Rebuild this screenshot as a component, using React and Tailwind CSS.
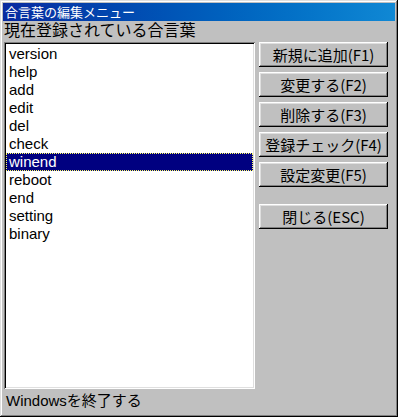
import React from 'react';

const items = ['version', 'help', 'add', 'edit', 'del', 'check', 'winend', 'reboot', 'end', 'setting', 'binary'];

const raised = 'shadow-[inset_-1px_-1px_#000,inset_1px_1px_#fff,inset_-2px_-2px_#808080,inset_2px_2px_#dfdfdf]';

const Btn = ({ children, className = '' }) => (
  <button className={`h-[25px] w-[129px] bg-[#c0c0c0] text-[15px] leading-none text-black font-['Noto_Sans_CJK_JP',sans-serif] flex items-center justify-center ${raised} ${className}`}>
    {children}
  </button>
);

export default function App() {
  return (
    <div className="w-[398px] h-[417px] bg-[#c0c0c0] p-[3px] flex flex-col font-['Liberation_Sans','Noto_Sans_CJK_JP',sans-serif] shadow-[inset_-1px_-1px_#000,inset_1px_1px_#dfdfdf,inset_-2px_-2px_#808080,inset_2px_2px_#fff]">
      {/* title bar */}
      <div className="h-[18px] bg-linear-to-r from-[#0a2aa0] to-[#1088d4] flex items-center pl-[2px] text-white text-[13px] leading-none">
        合言葉の編集メニュー
      </div>

      <div className="h-[21px] pl-[1px] text-[16px] leading-[20px] text-black">現在登録されている合言葉</div>

      <div className="flex flex-1 min-h-0 gap-[4px]">
        {/* list box */}
        <div className="w-[251px] ml-[1px] bg-white p-[2px] shadow-[inset_1px_1px_#808080,inset_-1px_-1px_#fff,inset_2px_2px_#000,inset_-2px_-2px_#dfdfdf]">
          <ul className="pt-[1px]">
            {items.map((it) => (
              <li
                key={it}
                className={`h-[18px] pl-[3px] text-[15px] leading-[18px] ${
                  it === 'winend' ? 'bg-[#000080] text-white outline-1 outline-dotted outline-[#ffff60] -outline-offset-1' : 'text-black'
                }`}
              >
                {it}
              </li>
            ))}
          </ul>
        </div>

        {/* buttons */}
        <div className="flex flex-col gap-[5px]">
          <Btn>新規に追加(F1)</Btn>
          <Btn>変更する(F2)</Btn>
          <Btn>削除する(F3)</Btn>
          <Btn>登録チェック(F4)</Btn>
          <Btn>設定変更(F5)</Btn>
          <Btn className="mt-[12px]">閉じる(ESC)</Btn>
        </div>
      </div>

      {/* status */}
      <div className="h-[25px] flex items-center pl-[3px] text-[15px] text-black">Windowsを終了する</div>
    </div>
  );
}
